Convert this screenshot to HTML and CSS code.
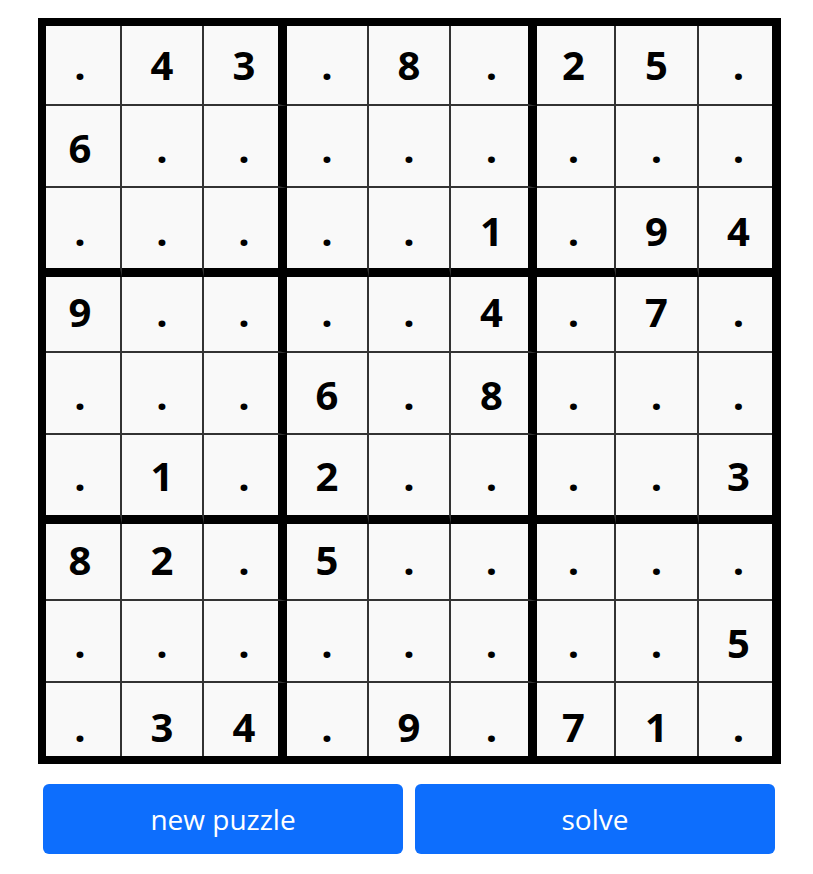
FILE: index.html
```html
<!DOCTYPE html>
<html lang="en">
<head>
<meta charset="utf-8">
<title>Sudoku</title>
<link rel="stylesheet" href="styles.css">
</head>
<body>
<main class="app">
  <div class="board">
    <div class="cell r1 c1">.</div><div class="cell r1 c2">4</div><div class="cell r1 c3">3</div><div class="cell r1 c4">.</div><div class="cell r1 c5">8</div><div class="cell r1 c6">.</div><div class="cell r1 c7">2</div><div class="cell r1 c8">5</div><div class="cell r1 c9">.</div>
    <div class="cell r2 c1">6</div><div class="cell r2 c2">.</div><div class="cell r2 c3">.</div><div class="cell r2 c4">.</div><div class="cell r2 c5">.</div><div class="cell r2 c6">.</div><div class="cell r2 c7">.</div><div class="cell r2 c8">.</div><div class="cell r2 c9">.</div>
    <div class="cell r3 c1">.</div><div class="cell r3 c2">.</div><div class="cell r3 c3">.</div><div class="cell r3 c4">.</div><div class="cell r3 c5">.</div><div class="cell r3 c6">1</div><div class="cell r3 c7">.</div><div class="cell r3 c8">9</div><div class="cell r3 c9">4</div>
    <div class="cell r4 c1">9</div><div class="cell r4 c2">.</div><div class="cell r4 c3">.</div><div class="cell r4 c4">.</div><div class="cell r4 c5">.</div><div class="cell r4 c6">4</div><div class="cell r4 c7">.</div><div class="cell r4 c8">7</div><div class="cell r4 c9">.</div>
    <div class="cell r5 c1">.</div><div class="cell r5 c2">.</div><div class="cell r5 c3">.</div><div class="cell r5 c4">6</div><div class="cell r5 c5">.</div><div class="cell r5 c6">8</div><div class="cell r5 c7">.</div><div class="cell r5 c8">.</div><div class="cell r5 c9">.</div>
    <div class="cell r6 c1">.</div><div class="cell r6 c2">1</div><div class="cell r6 c3">.</div><div class="cell r6 c4">2</div><div class="cell r6 c5">.</div><div class="cell r6 c6">.</div><div class="cell r6 c7">.</div><div class="cell r6 c8">.</div><div class="cell r6 c9">3</div>
    <div class="cell r7 c1">8</div><div class="cell r7 c2">2</div><div class="cell r7 c3">.</div><div class="cell r7 c4">5</div><div class="cell r7 c5">.</div><div class="cell r7 c6">.</div><div class="cell r7 c7">.</div><div class="cell r7 c8">.</div><div class="cell r7 c9">.</div>
    <div class="cell r8 c1">.</div><div class="cell r8 c2">.</div><div class="cell r8 c3">.</div><div class="cell r8 c4">.</div><div class="cell r8 c5">.</div><div class="cell r8 c6">.</div><div class="cell r8 c7">.</div><div class="cell r8 c8">.</div><div class="cell r8 c9">5</div>
    <div class="cell r9 c1">.</div><div class="cell r9 c2">3</div><div class="cell r9 c3">4</div><div class="cell r9 c4">.</div><div class="cell r9 c5">9</div><div class="cell r9 c6">.</div><div class="cell r9 c7">7</div><div class="cell r9 c8">1</div><div class="cell r9 c9">.</div>
  </div>
  <div class="actions">
    <button class="btn" type="button">new puzzle</button>
    <button class="btn" type="button">solve</button>
  </div>
</main>
</body>
</html>
```
FILE: styles.css
```css
html, body {
  margin: 0;
  padding: 0;
  background: #ffffff;
}

body {
  font-family: "Open Sans", "Noto Sans", sans-serif;
}

.app {
  width: 743px;
  padding: 18px 0 0 38px;
}

.board {
  display: grid;
  grid-template-columns: 76px 82px 83px 82px 82px 86px 79px 83px 73px;
  grid-template-rows: 80px 82px 89px 76px 82px 89px 77px 82px 73px;
  border-style: solid;
  border-color: #000;
  border-width: 8px 9px 8px 8px;
  width: 743px;
  box-sizing: border-box;
  background: #f9f9f9;
}

.cell {
  box-sizing: border-box;
  display: flex;
  align-items: center;
  justify-content: center;
  border-right: 2px solid #333;
  border-bottom: 2px solid #333;
  background: #f9f9f9;
  color: #000;
  font-weight: 700;
  font-size: 40px;
  line-height: 1;
  padding-top: 4px;
}

.c3, .c6 {
  border-right: 9px solid #000;
}

.c9 {
  border-right: 0;
}

.r3, .r6 {
  border-bottom: 9px solid #000;
}

.r9 {
  border-bottom: 0;
}

/* fine optical offsets of the glyphs inside the cells */
.c1 { padding-right: 6px; }
.c3 { padding-left: 6px; }
.c6 { padding-left: 4px; }
.c7 { padding-right: 4px; }
.c9 { padding-left: 6px; }

.r1 { padding-top: 0; }
.r3 { padding-top: 6px; }
.r4, .r7 { padding-top: 0; padding-bottom: 4px; }
.r6 { padding-top: 2px; }
.r9 { padding-top: 14px; }

.actions {
  display: flex;
  gap: 12px;
  padding: 20px 6px 0 5px;
}

.btn {
  flex: 1;
  height: 70px;
  border: 0;
  border-radius: 6px;
  background: #0d6efd;
  color: #fff;
  font-family: "Open Sans", "Noto Sans", sans-serif;
  font-size: 28px;
  padding: 0;
}
```
